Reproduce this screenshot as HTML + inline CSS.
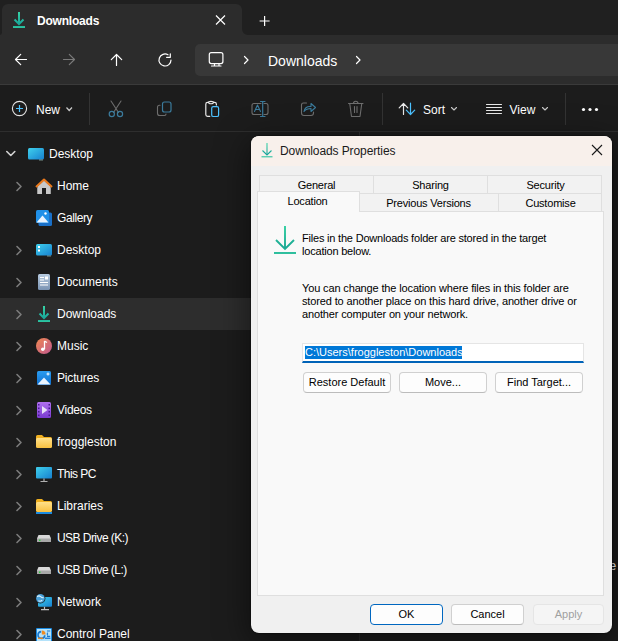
<!DOCTYPE html>
<html><head><meta charset="utf-8">
<style>
*{margin:0;padding:0;box-sizing:border-box}
html,body{width:618px;height:641px;overflow:hidden;background:#1c1c1c;font-family:"Liberation Sans",sans-serif}
.abs{position:absolute}
#tabstrip{left:0;top:0;width:618px;height:35px;background:#202020}
#tab{left:2px;top:4px;width:240px;height:31px;background:#2c2c2c;border-radius:6px 6px 0 0}
#nav{left:0;top:35px;width:618px;height:49px;background:#2c2c2c}
#navline{left:0;top:84px;width:618px;height:1px;background:#3a3a3a}
#cmd{left:0;top:85px;width:618px;height:46px;background:#1c1c1c}
#cmdline{left:0;top:131px;width:618px;height:1px;background:#2e2e2e}
#side{left:0;top:132px;width:618px;height:509px;background:#1c1c1c}
#addr{left:195px;top:44px;width:430px;height:32px;background:#383838;border-radius:5px}
.t{position:absolute;white-space:nowrap;color:#fff}
svg{position:absolute;overflow:visible}
.row{position:absolute;left:0;width:250px;height:32px}
.row .lbl{position:absolute;left:57px;top:9px;font-size:13px;color:#fff}
.sl{font-size:12px;line-height:14px}
.dt{text-align:center;letter-spacing:-0.2px;line-height:13px}
.dp{line-height:13px;letter-spacing:-0.2px}
.dp2{letter-spacing:-0.14px}
.chev{position:absolute;left:14px;top:11px}
#dlg{left:251px;top:136px;width:361px;height:497px;background:#f0f0f0;border-radius:8px;overflow:hidden;box-shadow:0 0 1px 1px rgba(0,0,0,.25), 0 8px 32px 2px rgba(0,0,0,.5)}
#dlgtitle{left:0;top:0;width:361px;height:30px;background:#f8f0eb}
.d{position:absolute;white-space:nowrap;color:#000;font-size:11px}
.tabb{position:absolute;background:#f2f2f2;border:1px solid #dfdfdf;height:19px}
.btn{position:absolute;background:#fdfdfd;border:1px solid #d0d0d0;border-bottom-color:#bcbcbc;border-radius:4px;height:21px;font-size:11px;text-align:center;line-height:19px;color:#000}
</style></head><body>
<div id="tabstrip" class="abs"></div>
<div id="tab" class="abs"></div>
<svg style="left:0;top:0" width="1" height="1"><path d="M242 29A6 6 0 0 0 248 35H242Z" fill="#2c2c2c"/><path d="M2 32.5A2.5 2.5 0 0 1 -0.5 35H2Z" fill="#2c2c2c"/></svg>
<div id="nav" class="abs"></div>
<div id="navline" class="abs"></div>
<div id="cmd" class="abs"></div>
<div id="cmdline" class="abs"></div>
<div id="side" class="abs"></div>
<div id="addr" class="abs"></div>

<!-- tab content -->
<svg style="left:0;top:0" width="1" height="1"><defs><linearGradient id="gdl3" gradientUnits="userSpaceOnUse" x1="0" y1="12" x2="0" y2="28"><stop offset="0" stop-color="#38d3a6"/><stop offset="0.75" stop-color="#18a79a"/><stop offset="1" stop-color="#2fc7a0"/></linearGradient><linearGradient id="gdl4" gradientUnits="userSpaceOnUse" x1="0" y1="306" x2="0" y2="322"><stop offset="0" stop-color="#38d3a6"/><stop offset="0.75" stop-color="#18a79a"/><stop offset="1" stop-color="#2fc7a0"/></linearGradient></defs><g fill="none" stroke="url(#gdl3)" stroke-width="2"><path d="M19 12V24"/><path d="M14.5 19.5L19 24L23.5 19.5"/><path d="M13 27H25"/></g></svg>
<div class="t" style="left:37px;top:14px;font-size:12px;font-weight:bold;letter-spacing:-0.2px">Downloads</div>
<svg style="left:0;top:0" width="1" height="1"><g stroke="#fff" stroke-width="1.2"><path d="M216 15.5L225 24.5M225 15.5L216 24.5"/><path d="M264.6 16V26M259.6 21H269.6"/></g></svg>

<!-- nav icons -->
<svg style="left:0;top:0" width="1" height="1"><g fill="none" stroke="#fff" stroke-width="1.2" stroke-linecap="round" stroke-linejoin="round">
<path d="M15.5 59.5H26.5M20.7 54.3L15.5 59.5L20.7 64.7"/>
<path d="M63.5 59.5H74.5M69.3 54.3L74.5 59.5L69.3 64.7" stroke="#7a7a7a"/>
<path d="M116.5 54.5V65.5M111.3 59.7L116.5 54.5L121.7 59.7"/>
<path d="M171 60A6 6 0 1 1 168 54.8"/><path d="M170.3 53.8V57.3H166.6"/>
<rect x="209.3" y="52.6" width="13.6" height="11" rx="2"/><path d="M211.5 66H221M214.5 64V66M219 64V66"/>
<path d="M244.5 56.5L248 60L244.5 63.5"/>
<path d="M356.5 56.5L360 60L356.5 63.5"/>
</g></svg>
<div class="t" style="left:268px;top:52.5px;font-size:14px">Downloads</div>

<!-- command bar -->
<svg style="left:0;top:0" width="1" height="1"><g fill="none" stroke-width="1.2">
<circle cx="19.5" cy="108.5" r="7.1" stroke="#e4e4e4" stroke-width="1.1"/><path d="M19.5 105V112M16 108.5H23" stroke="#4cc2ff" stroke-width="1.2"/>
<path d="M66.5 107.5L69.2 110.5L72 107.5" stroke="#ccc"/>
</g></svg>
<div class="t" style="left:36px;top:103px;font-size:12px">New</div>
<div class="abs" style="left:89px;top:93px;width:1px;height:32px;background:#333"></div>



<!-- toolbar icons -->
<svg style="left:0;top:0" width="1" height="1"><g fill="none" stroke-width="1.1" stroke-linecap="round" stroke-linejoin="round">
<path d="M111 101L118.5 112.5M121 101L113.5 112.5" stroke="#6e6e6e"/>
<circle cx="111.8" cy="114" r="2.6" stroke="#3b7b9c" stroke-width="1.2"/><circle cx="120" cy="114" r="2.6" stroke="#3b7b9c" stroke-width="1.2"/>
<path d="M160 105.2H159.5Q157.5 105.2 157.5 107.2V113.2Q157.5 115.5 159.8 115.5H164.5Q166 115.5 166 114" stroke="#6e6e6e" stroke-width="1.1"/>
<rect x="162.5" y="102" width="8.5" height="10" rx="2" stroke="#3b7b9c" stroke-width="1.2"/>
<path d="M209.8 116.3H207.6Q205.8 116.3 205.8 114.5V104.2Q205.8 102.4 207.6 102.4H214.6Q216.4 102.4 216.4 104.2V104.9" stroke="#e8e8e8" stroke-width="1.2"/>
<ellipse cx="211" cy="102.6" rx="2.5" ry="1.2" stroke="#e8e8e8" stroke-width="1.1" fill="#1c1c1c"/>
<rect x="211.7" y="106.7" width="6.9" height="9.8" rx="1.6" stroke="#4cc2ff" stroke-width="1.2"/>
<path d="M261 103.5H254Q252 103.5 252 105.5V112.5Q252 114.5 254 114.5H261M264 103.5H266Q268 103.5 268 105.5V112.5Q268 114.5 266 114.5H264" stroke="#6e6e6e"/>
<path d="M260.5 101.5H265M262.7 101.5V116.5M260.5 116.5H265" stroke="#3b7b9c" stroke-width="1.2"/>
<path d="M254.5 111.5L257.5 105L260.5 111.5M255.5 109.5H259.5" stroke="#3b7b9c"/>
<path d="M306.5 103H303.5Q301.5 103 301.5 105V113Q301.5 115.5 304 115.5H311Q313.5 115.5 313.5 113V112" stroke="#6e6e6e"/>
<path d="M304 111.5Q305 106 311 106.5V103.5L315.5 107.5L311 111.5V108.5Q306.5 108.5 304 111.5Z" stroke="#3b7b9c" stroke-width="1.1"/>
<path d="M348.5 103.5H363M353.5 103.5Q353.5 101.3 355.7 101.3Q358 101.3 358 103.5M349.8 104L351.5 116.5H360L361.7 104M354.5 106.5V112.5M357 106.5V112.5" stroke="#6e6e6e" stroke-width="1.1"/>
<path d="M403.5 114.5V103.5M399.2 107.8L403.5 103.5L407.8 107.8" stroke="#e8e8e8" stroke-width="1.2"/>
<path d="M410.5 103.2V114.5M406.3 110.2L410.5 114.5L414.7 110.2" stroke="#4cc2ff" stroke-width="1.2"/>
<path d="M451.5 107.5L454 110L456.5 107.5" stroke="#c8c8c8"/>
<path d="M486.5 104.5H501.5M486.5 107.5H501.5M486.5 110.5H501.5M486.5 113.5H501.5" stroke="#e8e8e8" stroke-width="1.1"/>
<path d="M542.5 107.5L545 110L547.5 107.5" stroke="#c8c8c8"/>
</g>
<g fill="#fff"><circle cx="583.5" cy="109.5" r="1.6"/><circle cx="590" cy="109.5" r="1.6"/><circle cx="596.5" cy="109.5" r="1.6"/></g>
</svg>
<div class="abs" style="left:382px;top:93px;width:1px;height:32px;background:#333"></div>
<div class="abs" style="left:565px;top:93px;width:1px;height:32px;background:#333"></div>
<div class="t" style="left:423px;top:103px;font-size:12px">Sort</div>
<div class="t" style="left:509.5px;top:103px;font-size:12px">View</div>
<div class="abs" style="left:359px;top:132px;width:1px;height:4px;background:#2e2e2e"></div>
<div class="abs" style="left:359px;top:633px;width:1px;height:8px;background:#2a2a2a"></div>

<!-- sidebar -->
<div class="abs" style="left:0;top:298px;width:251px;height:32px;background:#2d2d2d"></div>
<svg style="left:0;top:0" width="1" height="1"><g fill="none" stroke="#7c7c7c" stroke-width="1.6" stroke-linecap="round" stroke-linejoin="round">
<path d="M6.8 151.5L10.8 155.5L14.8 151.5" stroke="#d4d4d4"/>
<path d="M17 182.5L21 186.5L17 190.5"/>
<path d="M17 246.5L21 250.5L17 254.5"/>
<path d="M17 278.5L21 282.5L17 286.5"/>
<path d="M17 310.5L21 314.5L17 318.5"/>
<path d="M17 342.5L21 346.5L17 350.5"/>
<path d="M17 374.5L21 378.5L17 382.5"/>
<path d="M17 406.5L21 410.5L17 414.5"/>
<path d="M17 438.5L21 442.5L17 446.5"/>
<path d="M17 470.5L21 474.5L17 478.5"/>
<path d="M17 502.5L21 506.5L17 510.5"/>
<path d="M17 534.5L21 538.5L17 542.5"/>
<path d="M17 566.5L21 570.5L17 574.5"/>
<path d="M17 598.5L21 602.5L17 606.5"/>
<path d="M17 630.5L21 634.5L17 638.5"/>
</g>
<defs>
<linearGradient id="gdesk" x1="0" y1="0" x2="1" y2="1"><stop offset="0" stop-color="#3fd0ec"/><stop offset="1" stop-color="#1680d0"/></linearGradient>
<linearGradient id="gdoc" x1="0" y1="0" x2="0" y2="1"><stop offset="0" stop-color="#b8cbe0"/><stop offset="1" stop-color="#7a93b3"/></linearGradient>
<linearGradient id="gmus" x1="0" y1="0" x2="1" y2="1"><stop offset="0" stop-color="#f08850"/><stop offset="1" stop-color="#c05890"/></linearGradient>
<linearGradient id="gvid" x1="0" y1="0" x2="0" y2="1"><stop offset="0" stop-color="#b070f0"/><stop offset="1" stop-color="#7a3ad0"/></linearGradient>
<linearGradient id="gfold" x1="0" y1="0" x2="0" y2="1"><stop offset="0" stop-color="#ffe08a"/><stop offset="1" stop-color="#f8c040"/></linearGradient>
<linearGradient id="gpic" x1="0" y1="0" x2="0" y2="1"><stop offset="0" stop-color="#2a9cf0"/><stop offset="1" stop-color="#1070d0"/></linearGradient>
</defs>
<!-- root desktop -->
<rect x="28" y="148" width="16" height="11.5" rx="1.5" fill="url(#gdesk)"/>
<rect x="39.5" y="159.5" width="1" height="1" fill="#cfe"/><rect x="41.5" y="159.5" width="1" height="1" fill="#cfe"/>
<!-- home -->
<path d="M37.5 187.5V194H50.5V187.5" fill="#c8c8c8"/>
<path d="M44 180.5L37.5 186.5V194H50.5V186.5Z" fill="#c8c8c8"/>
<rect x="42" y="188" width="4" height="6" fill="#1c1c1c"/>
<path d="M36 187L44 179.5L52 187" fill="none" stroke="#ec7a1c" stroke-width="2" stroke-linejoin="round"/>
<!-- gallery -->
<rect x="38.5" y="212.5" width="13.5" height="13.5" rx="1.5" fill="#1a70c8"/>
<rect x="36" y="210" width="13" height="13" rx="1.5" fill="#2090e8"/>
<path d="M36.5 222.5L42.5 215.5L48.5 222.5Z" fill="#eaf4ff"/>
<circle cx="45.5" cy="213.5" r="1.2" fill="#fff"/>
<!-- desktop -->
<rect x="36" y="244" width="16" height="11.5" rx="1.5" fill="url(#gdesk)"/>
<rect x="38" y="246" width="2" height="2" fill="#fff"/><rect x="38" y="249.5" width="2" height="2" fill="#fff"/>
<rect x="47.5" y="255.5" width="1" height="1" fill="#cfe"/><rect x="49.5" y="255.5" width="1" height="1" fill="#cfe"/>
<!-- documents -->
<rect x="38" y="274" width="12" height="16" rx="1.5" fill="url(#gdoc)"/>
<g fill="#fff"><rect x="40" y="277" width="4" height="1"/><rect x="40" y="279.5" width="4" height="1"/><rect x="45" y="276.5" width="3" height="3"/><rect x="40" y="282" width="8" height="1"/><rect x="40" y="284.5" width="8" height="1"/></g>
<!-- downloads -->
<g fill="none" stroke="url(#gdl4)" stroke-width="2"><path d="M44 306V318"/><path d="M39.5 313.5L44 318L48.5 313.5"/><path d="M38 321H50"/></g>
<!-- music -->
<circle cx="44" cy="346" r="8" fill="url(#gmus)"/>
<path d="M44.5 341V349" stroke="#fff" stroke-width="1.3"/><circle cx="42.8" cy="349.2" r="1.8" fill="#fff"/><path d="M44.5 341.2L47 342.5" stroke="#fff" stroke-width="1.3"/>
<!-- pictures -->
<rect x="37" y="371" width="14" height="14" rx="1.5" fill="url(#gpic)"/>
<path d="M37.5 384.5L44 377.5L50.5 384.5Z" fill="#eaf4ff"/>
<path d="M48 372.5V375.5M46.5 374H49.5" stroke="#fff" stroke-width="1"/>
<!-- videos -->
<rect x="37" y="402" width="14" height="16" rx="1.5" fill="url(#gvid)"/>
<g fill="#4a1a90"><rect x="38" y="404" width="1.5" height="1.5"/><rect x="38" y="407.5" width="1.5" height="1.5"/><rect x="38" y="411" width="1.5" height="1.5"/><rect x="38" y="414.5" width="1.5" height="1.5"/><rect x="48.5" y="404" width="1.5" height="1.5"/><rect x="48.5" y="407.5" width="1.5" height="1.5"/><rect x="48.5" y="411" width="1.5" height="1.5"/><rect x="48.5" y="414.5" width="1.5" height="1.5"/></g>
<path d="M42 406V414L47.5 410Z" fill="#e8e0f8"/>
<!-- froggleston folder -->
<path d="M36 436.5Q36 435 37.5 435H42L44 437H50.5Q52 437 52 438.5V440H36Z" fill="#f0b020"/>
<rect x="36" y="438" width="16" height="10" rx="1.5" fill="url(#gfold)"/>
<!-- this pc -->
<rect x="36" y="467" width="16" height="11.5" rx="1" fill="url(#gdesk)"/>
<path d="M44 478.5V481M40.5 481.5H47.5" stroke="#b0b0b0" stroke-width="1.2"/>
<!-- libraries -->
<path d="M36 500.5Q36 499 37.5 499H42L44 501H50.5Q52 501 52 502.5V504H36Z" fill="#f0b020"/>
<rect x="36" y="502" width="16" height="10" rx="1.5" fill="url(#gfold)"/>
<rect x="36" y="512" width="16" height="2" fill="#1a8ae0"/>
<!-- usb -->
<path d="M38.5 535H49.5L51 538.5V542H37V538.5Z" fill="#d8d8d8"/><rect x="37" y="538.5" width="14" height="3.5" fill="#a8a8a8"/><rect x="39" y="539.5" width="1.5" height="1.5" fill="#30d040"/>
<path d="M38.5 567H49.5L51 570.5V574H37V570.5Z" fill="#d8d8d8"/><rect x="37" y="570.5" width="14" height="3.5" fill="#a8a8a8"/><rect x="39" y="571.5" width="1.5" height="1.5" fill="#30d040"/>
<!-- network -->
<rect x="38" y="597" width="14" height="9.7" rx="1" fill="url(#gdesk)"/>
<path d="M44.5 606.7V609M41 609.6H49" stroke="#c0c0c0" stroke-width="1.2"/>
<circle cx="40.4" cy="598.4" r="5" fill="#1c1c1c"/>
<circle cx="40.4" cy="598.4" r="4.3" fill="#4aa0d8"/>
<path d="M37.2 596.8Q38.8 595 40.6 596.6T43.6 597.6M38.4 600.8Q40.2 601.8 42.2 600.2" stroke="#e0f4ff" stroke-width="1.1" fill="none"/>
<!-- control panel -->
<rect x="36" y="628" width="16" height="14" rx="1" fill="#1a8ae0"/>
<rect x="37" y="629" width="14" height="12" fill="#b4e2fa"/>
<path d="M41.2 631.6A3.4 3.4 0 1 0 44.8 635.2" stroke="#1a78d0" stroke-width="1.6" fill="none"/>
<path d="M41.8 630.6V634.4H45.6A3.8 3.8 0 0 0 41.8 630.6Z" fill="#f08a20"/>
<path d="M47 631H50.2M47.8 632.6Q46.4 634 47.8 635.4M47 636.4H50.2" stroke="#1a78d0" stroke-width="1.1" fill="none"/>
<rect x="38" y="637.6" width="5" height="1.3" fill="#f08a20"/><rect x="45" y="637.6" width="5.5" height="1.3" fill="#1a78d0"/>
</svg>
<div class="t sl" style="left:49px;top:147px">Desktop</div>
<div class="t sl" style="left:57px;top:179px">Home</div>
<div class="t sl" style="left:57px;top:211px;letter-spacing:-0.4px">Gallery</div>
<div class="t sl" style="left:57px;top:243px">Desktop</div>
<div class="t sl" style="left:57px;top:275px">Documents</div>
<div class="t sl" style="left:57px;top:307px">Downloads</div>
<div class="t sl" style="left:57px;top:339px">Music</div>
<div class="t sl" style="left:57px;top:371px;letter-spacing:-0.17px">Pictures</div>
<div class="t sl" style="left:57px;top:403px;letter-spacing:-0.28px">Videos</div>
<div class="t sl" style="left:57px;top:435px">froggleston</div>
<div class="t sl" style="left:57px;top:467px;letter-spacing:-0.55px">This PC</div>
<div class="t sl" style="left:57px;top:499px">Libraries</div>
<div class="t sl" style="left:57px;top:531px;letter-spacing:-0.55px">USB Drive (K:)</div>
<div class="t sl" style="left:57px;top:563px;letter-spacing:-0.55px">USB Drive (L:)</div>
<div class="t sl" style="left:57px;top:595px">Network</div>
<div class="t sl" style="left:57px;top:627px">Control Panel</div>


<div class="t sl" style="left:609.5px;top:559px">e</div>
<!-- dialog -->
<div id="dlg" class="abs"></div>
<div class="abs" style="left:251px;top:136px;width:361px;height:30px;background:#f8f0eb;border-radius:8px 8px 0 0"></div>
<svg style="left:0;top:0" width="1" height="1"><defs><linearGradient id="gdl2" gradientUnits="userSpaceOnUse" x1="0" y1="143" x2="0" y2="157"><stop offset="0" stop-color="#3fd5a8"/><stop offset="0.8" stop-color="#12a29a"/><stop offset="1" stop-color="#2fc7a0"/></linearGradient></defs><g fill="none" stroke="url(#gdl2)" stroke-width="1.1"><path d="M267 143V155"/><path d="M262.5 150.5L267 155L271.5 150.5"/><path d="M261.5 156.8H272.5"/></g>
<path d="M592 145L602 155M602 145L592 155" stroke="#1a1a1a" stroke-width="1.1"/></svg>
<div class="d" style="left:280px;top:144px;font-size:12px;letter-spacing:-0.1px;color:#1a1a1a">Downloads Properties</div>

<!-- tabs -->
<div class="tabb" style="left:259px;top:175px;width:115px;height:19px"></div>
<div class="tabb" style="left:373px;top:175px;width:115px;height:19px"></div>
<div class="tabb" style="left:487px;top:175px;width:115px;height:19px"></div>
<div class="tabb" style="left:359px;top:193px;width:140px;height:19px"></div>
<div class="tabb" style="left:498px;top:193px;width:104px;height:19px"></div>
<div class="abs" style="left:257px;top:211px;width:347px;height:385px;background:#f9f9f9;border:1px solid #dfdfdf"></div>
<div class="abs" style="left:257px;top:191px;width:103px;height:21px;background:#f9f9f9;border:1px solid #dfdfdf;border-bottom:none"></div>
<div class="d dt" style="left:259px;width:115px;top:179px">General</div>
<div class="d dt" style="left:373px;width:115px;top:179px">Sharing</div>
<div class="d dt" style="left:488px;width:115px;top:179px">Security</div>
<div class="d dt" style="left:257px;width:101px;top:195px">Location</div>
<div class="d dt" style="left:359px;width:139px;top:197px">Previous Versions</div>
<div class="d dt" style="left:499px;width:103px;top:197px">Customise</div>

<svg style="left:0;top:0" width="1" height="1"><defs><linearGradient id="gdl" gradientUnits="userSpaceOnUse" x1="0" y1="226" x2="0" y2="254"><stop offset="0" stop-color="#30cfa0"/><stop offset="0.75" stop-color="#1aa893"/><stop offset="1" stop-color="#26bf9a"/></linearGradient></defs><g fill="none" stroke="url(#gdl)" stroke-width="1.9"><path d="M285 226V248.5"/><path d="M276 240L285 249L294 240"/><path d="M274 253H296"/></g></svg>
<div class="d dp" style="left:302px;top:232px">Files in the Downloads folder are stored in the target<br>location below.</div>
<div class="d dp dp2" style="left:302px;top:282px">You can change the location where files in this folder are<br>stored to another place on this hard drive, another drive or<br>another computer on your network.</div>

<div class="abs" style="left:302px;top:343px;width:282px;height:20px;background:#fff;border:1px solid #e5e5e5;border-bottom:2px solid #0063b8"></div>
<div class="abs" style="left:305px;top:346px;width:157px;height:13px;background:#0078d7"></div>
<div class="d" style="left:305px;top:346px;color:#fff;line-height:13px">C:\Users\froggleston\Downloads</div>

<div class="btn" style="left:303px;top:372px;width:88px">Restore Default</div>
<div class="btn" style="left:399px;top:372px;width:88px">Move...</div>
<div class="btn" style="left:495px;top:372px;width:88px">Find Target...</div>

<div class="btn" style="left:370px;top:604px;width:73px;border:1px solid #0067c0">OK</div>
<div class="btn" style="left:451px;top:604px;width:73px">Cancel</div>
<div class="btn" style="left:533px;top:604px;width:71px;background:#f5f5f5;border-color:#e5e5e5;color:#a0a0a0">Apply</div>

</body></html>
